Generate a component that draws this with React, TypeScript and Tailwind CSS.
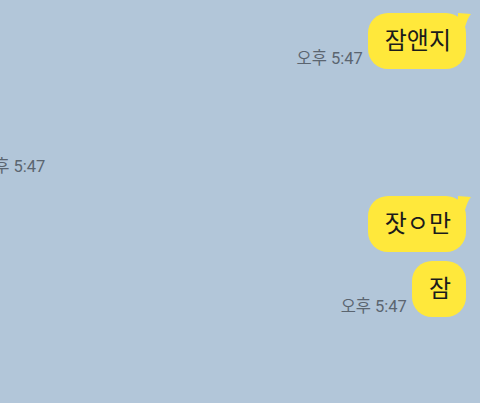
import React from 'react'

const Tail = () => (
  <svg className="absolute -right-[6px] top-0" width="14" height="14" viewBox="0 0 14 14">
    <path d="M0 0 L13 1 Q10 4 7 14 L0 14 Z" fill="#ffe83b" />
  </svg>
)

const Bubble = ({ text, tail }: { text: string; tail?: boolean }) => (
  <div className="relative">
    <div className="h-[56px] rounded-[20px] bg-[#ffe83b] pl-[17px] pr-[15px] flex items-center text-[24px] text-[#1b1b1b] leading-none">
      {text}
    </div>
    {tail && <Tail />}
  </div>
)

const Time = ({ className = '' }: { className?: string }) => (
  <p className={`text-[16.5px] leading-none text-[#5b6570] whitespace-nowrap ${className}`}>오후 5:47</p>
)

export default function App() {
  return (
    <div
      className="w-[480px] h-[403px] overflow-hidden bg-[#b2c6d9] flex flex-col"
      style={{ fontFamily: 'Roboto, "Noto Sans CJK KR", sans-serif' }}
    >
      <div className="flex justify-end items-end gap-[5px] pr-[14px] pt-[13px]">
        <Time className="mb-[2px]" />
        <Bubble text="잠앤지" tail />
      </div>

      <div className="flex mt-[90px]">
        <Time className="-ml-[21px]" />
      </div>

      <div className="flex justify-end pr-[14px] mt-[20px]">
        <Bubble text="잣ㅇ만" tail />
      </div>

      <div className="flex justify-end items-end gap-[5px] pr-[14px] mt-[9px]">
        <Time className="mb-[1px]" />
        <Bubble text="잠" />
      </div>
    </div>
  )
}
